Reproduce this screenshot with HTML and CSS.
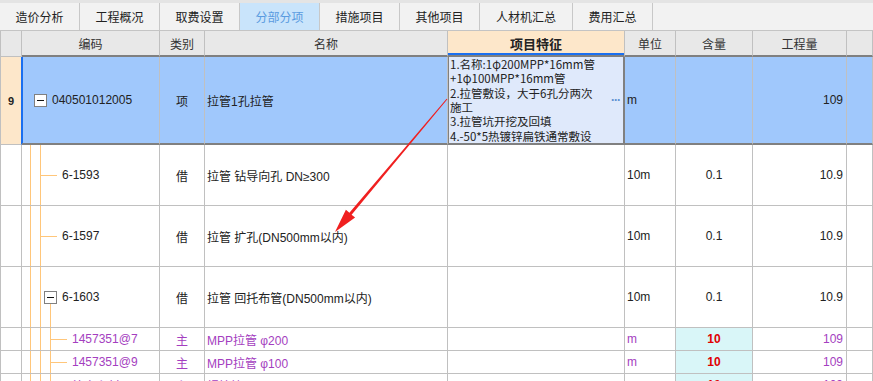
FILE: index.html
```html
<!DOCTYPE html>
<html lang="zh-CN">
<head>
    <meta charset="UTF-8">
    <title>分部分项</title>
    <link rel="stylesheet" href="styles.css">
</head>
<body>
    <div class="tabs">
        <div class="tab">造价分析</div>
        <div class="tab">工程概况</div>
        <div class="tab">取费设置</div>
        <div class="tab active">分部分项</div>
        <div class="tab">措施项目</div>
        <div class="tab">其他项目</div>
        <div class="tab wide">人材机汇总</div>
        <div class="tab">费用汇总</div>
    </div>

    <div class="sheet">
        <div class="row head">
            <div class="cell num"></div>
            <div class="cell">编码</div>
            <div class="cell">类别</div>
            <div class="cell">名称</div>
            <div class="cell feat">项目特征</div>
            <div class="cell">单位</div>
            <div class="cell">含量</div>
            <div class="cell">工程量</div>
            <div class="cell"></div>
        </div>

        <div class="row sel">
            <div class="cell num">9</div>
            <div class="cell code tree-top"><span class="fold"></span>040501012005</div>
            <div class="cell type">项</div>
            <div class="cell name">拉管1孔拉管</div>
            <div class="cell editor">
                <div class="feat-text">
                    <div>1.名称:1φ200MPP*16mm管</div>
                    <div>+1φ100MPP*16mm管</div>
                    <div>2.拉管敷设，大于6孔分两次</div>
                    <div>施工</div>
                    <div>3.拉管坑开挖及回填</div>
                    <div>4.-50*5热镀锌扁铁通常敷设</div>
                </div>
                <span class="more">···</span>
            </div>
            <div class="cell unit">m</div>
            <div class="cell amt"></div>
            <div class="cell qty">109</div>
            <div class="cell"></div>
        </div>

        <div class="row sub">
            <div class="cell num"></div>
            <div class="cell code tree-leaf">6-1593</div>
            <div class="cell type">借</div>
            <div class="cell name">拉管 钻导向孔 DN≥300</div>
            <div class="cell"></div>
            <div class="cell unit">10m</div>
            <div class="cell amt">0.1</div>
            <div class="cell qty">10.9</div>
            <div class="cell"></div>
        </div>

        <div class="row sub">
            <div class="cell num"></div>
            <div class="cell code tree-leaf">6-1597</div>
            <div class="cell type">借</div>
            <div class="cell name">拉管 扩孔(DN500mm以内)</div>
            <div class="cell"></div>
            <div class="cell unit">10m</div>
            <div class="cell amt">0.1</div>
            <div class="cell qty">10.9</div>
            <div class="cell"></div>
        </div>

        <div class="row sub">
            <div class="cell num"></div>
            <div class="cell code tree-open"><span class="fold"></span>6-1603</div>
            <div class="cell type">借</div>
            <div class="cell name">拉管 回托布管(DN500mm以内)</div>
            <div class="cell"></div>
            <div class="cell unit">10m</div>
            <div class="cell amt">0.1</div>
            <div class="cell qty">10.9</div>
            <div class="cell"></div>
        </div>

        <div class="row mat">
            <div class="cell num"></div>
            <div class="cell code tree-mat">1457351@7</div>
            <div class="cell type">主</div>
            <div class="cell name">MPP拉管 φ200</div>
            <div class="cell"></div>
            <div class="cell unit">m</div>
            <div class="cell amt">10</div>
            <div class="cell qty">109</div>
            <div class="cell"></div>
        </div>

        <div class="row mat">
            <div class="cell num"></div>
            <div class="cell code tree-mat">1457351@9</div>
            <div class="cell type">主</div>
            <div class="cell name">MPP拉管 φ100</div>
            <div class="cell"></div>
            <div class="cell unit">m</div>
            <div class="cell amt">10</div>
            <div class="cell qty">109</div>
            <div class="cell"></div>
        </div>

        <div class="row mat">
            <div class="cell num"></div>
            <div class="cell code tree-mat">补充主材001@1</div>
            <div class="cell type">主</div>
            <div class="cell name">焊接管</div>
            <div class="cell"></div>
            <div class="cell unit">m</div>
            <div class="cell amt">10</div>
            <div class="cell qty">109</div>
            <div class="cell"></div>
        </div>
    </div>

    <!-- red annotation arrow drawn over the grid -->
    <svg class="arrow" width="873" height="381" viewBox="0 0 873 381">
        <polygon points="447.4,99.3 446.6,98.7 349.4,212.7 345.9,209.8 335,232 355.1,217.6 351.6,214.7" fill="#f02020"/>
    </svg>
</body>
</html>
```

FILE: styles.css
```css
html, body {
    margin: 0;
    height: 381px;
    overflow: hidden;
}

body {
    position: relative;
    background: #fff;
    font-family: "Liberation Sans", "Noto Sans CJK SC", sans-serif;
    font-size: 12px;
    color: #222;
}

/* tabs */
.tabs {
    display: flex;
    height: 31px;
    box-sizing: border-box;
    background: #f2f2f2;
    border-top: 3px solid #e4e4e4;
    border-bottom: 1px solid #c4c4c4;
}

.tab {
    width: 80px;
    box-sizing: border-box;
    border-right: 1px solid #c8c8c8;
    display: flex;
    align-items: center;
    justify-content: center;
    font-family: "Noto Sans CJK SC", sans-serif;
    font-size: 12px;
    color: #222;
}

.tab.wide {
    width: 93px;
}

.tab.active {
    background: #c9e4fb;
    color: #5a9be0;
}

/* grid */
.sheet {
    display: grid;
    grid-template-columns: 21px 138px 45px 243px 177px 51px 77px 94px 1fr;
    border-left: 1px solid #c0c0c0;
}

.row {
    display: contents;
}

.cell {
    box-sizing: border-box;
    border-right: 1px solid #c0c0c0;
    border-bottom: 1px solid #c0c0c0;
    display: flex;
    align-items: center;
    white-space: nowrap;
    overflow: hidden;
}

.head .cell {
    height: 26px;
    background: #e8e8e8;
    justify-content: center;
    border-bottom: 2px solid #808080;
    font-family: "Noto Sans CJK SC", sans-serif;
    color: #333;
}

.head .cell.num {
    border-bottom: 1px solid #c0c0c0;
}

.head .cell.feat {
    background: #fde7ca;
    font-weight: bold;
    font-size: 13px;
    color: #222;
    box-shadow: inset 0 -2px 0 #1a6ff0;
}

.num {
    justify-content: center;
    font-weight: bold;
    font-size: 11px;
}

.type {
    justify-content: center;
}

.name, .unit {
    padding-left: 2px;
}

.amt {
    justify-content: center;
}

.qty {
    justify-content: flex-end;
    padding-right: 3px;
}

/* selected row */
.sel .cell {
    height: 88px;
    background: #a0c8fc;
    border-bottom: 2px solid #808080;
}

.sel .cell.num {
    background: #fde7ca;
    border-bottom: 1px solid #c0c0c0;
    border-right-color: #1a6ff0;
}

.sel .cell.editor {
    background: #dfe9fb;
    border-right: 2px solid #808080;
    box-shadow: inset 1px 0 0 #808080;
    padding-left: 2px;
    overflow: visible;
}

.feat-text {
    font-family: "Noto Sans CJK SC", sans-serif;
    font-size: 11.5px;
}

.feat-text div {
    height: 14.3px;
    line-height: 14.3px;
}

.more {
    margin-left: auto;
    margin-right: 3px;
    color: #5b8fd0;
    font-weight: bold;
    letter-spacing: -1px;
}

.sub .cell {
    height: 61px;
}

.mat .cell {
    height: 23px;
    color: #a43ec0;
}

.mat .cell.amt {
    background: #d9f6f8;
    color: #e00000;
    font-weight: bold;
}

/* tree lines in the code column */
.code {
    --tl: #ffc67a;
    background-repeat: no-repeat;
}

.tree-top {
    padding-left: 12px;
    background-image: linear-gradient(var(--tl), var(--tl)), linear-gradient(var(--tl), var(--tl));
    background-position: 8px 0, 18px 48px;
    background-size: 1px 100%, 1px 100%;
}

.tree-leaf {
    padding-left: 40px;
    background-image: linear-gradient(var(--tl), var(--tl)), linear-gradient(var(--tl), var(--tl)), linear-gradient(var(--tl), var(--tl));
    background-position: 8px 0, 18px 0, 18px 50%;
    background-size: 1px 100%, 1px 100%, 17px 1px;
}

.tree-open {
    padding-left: 22px;
    background-image: linear-gradient(var(--tl), var(--tl)), linear-gradient(var(--tl), var(--tl)), linear-gradient(var(--tl), var(--tl));
    background-position: 8px 0, 18px 0, 28px 37px;
    background-size: 1px 100%, 1px 100%, 1px 100%;
}

.tree-mat {
    padding-left: 50px;
    background-image: linear-gradient(var(--tl), var(--tl)), linear-gradient(var(--tl), var(--tl)), linear-gradient(var(--tl), var(--tl)), linear-gradient(var(--tl), var(--tl));
    background-position: 8px 0, 18px 0, 28px 0, 28px 50%;
    background-size: 1px 100%, 1px 100%, 1px 100%, 17px 1px;
}

.sel .tree-top {
    box-shadow: inset 1px 0 0 #1a6ff0;
}

.fold {
    width: 13px;
    height: 13px;
    box-sizing: border-box;
    border: 1px solid #808080;
    background: linear-gradient(#111, #111) center / 7px 1px no-repeat, #fff;
    margin-right: 5px;
    flex: none;
}

.arrow {
    position: absolute;
    left: 0;
    top: 0;
    pointer-events: none;
}
```
